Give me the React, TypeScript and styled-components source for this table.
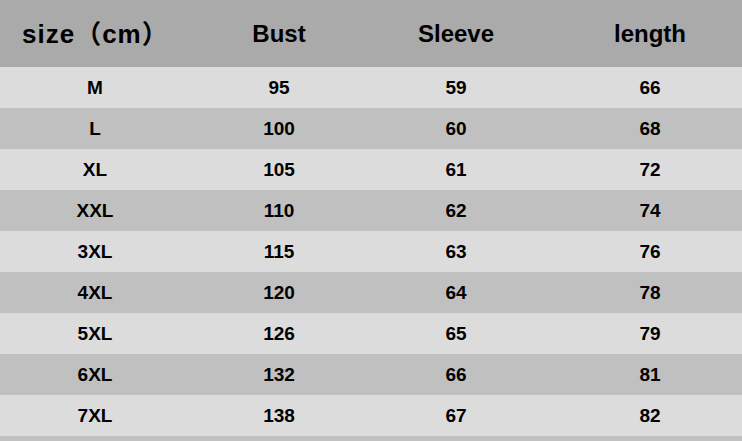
import styled, { createGlobalStyle } from "styled-components";

const ROWS = [
  ["M", "95", "59", "66"],
  ["L", "100", "60", "68"],
  ["XL", "105", "61", "72"],
  ["XXL", "110", "62", "74"],
  ["3XL", "115", "63", "76"],
  ["4XL", "120", "64", "78"],
  ["5XL", "126", "65", "79"],
  ["6XL", "132", "66", "81"],
  ["7XL", "138", "67", "82"],
];

export default function App() {
  return (
    <>
      <GlobalStyle />
      <StTable>
        <StHeadRow>
          <StSizeTitle>size（cm）</StSizeTitle>
          <StCell>Bust</StCell>
          <StCell>Sleeve</StCell>
          <StCell>length</StCell>
        </StHeadRow>
        {ROWS.map((row, i) => (
          <StRow key={row[0]} $dark={i % 2 === 1}>
            {row.map((value, j) => (
              <StCell key={j}>{value}</StCell>
            ))}
          </StRow>
        ))}
        <StRow $dark />
      </StTable>
    </>
  );
}

const GlobalStyle = createGlobalStyle`
  html, body {
    margin: 0;
    padding: 0;
    background: #dcdcdc;
  }
`;

const StTable = styled.div`
  width: 742px;
  height: 441px;
  overflow: hidden;

  display: flex;
  flex-direction: column;

  font-family: "Liberation Sans", "Noto Sans CJK SC", sans-serif;
  font-weight: bold;
  color: #000;
`;

const StHeadRow = styled.div`
  height: 67px;
  flex-shrink: 0;

  display: grid;
  grid-template-columns: 190px 178px 176px 1fr;
  align-items: center;

  background-color: #aaaaaa;
  font-size: 24px;

  & > :last-child {
    padding-left: 14px;
  }
`;

const StRow = styled.div<{ $dark?: boolean }>`
  height: 41px;
  flex-shrink: 0;

  display: grid;
  grid-template-columns: 190px 178px 176px 1fr;
  align-items: center;

  background-color: ${({ $dark }) => ($dark ? "#c0c0c0" : "#dcdcdc")};
  font-size: 19px;

  & > :last-child {
    padding-left: 14px;
  }
`;

const StCell = styled.div`
  text-align: center;
  white-space: nowrap;
`;

const StSizeTitle = styled.div`
  padding-left: 22px;
  padding-bottom: 5px;

  font-size: 26px;
  letter-spacing: 1px;
  white-space: nowrap;
`;
